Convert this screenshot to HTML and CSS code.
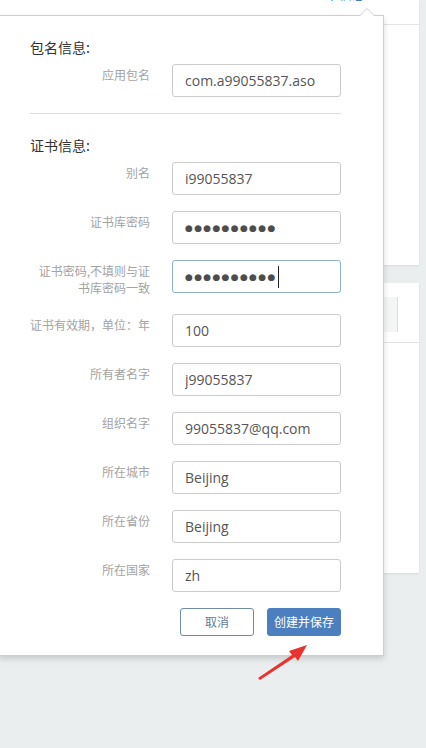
FILE: index.html
```html
<!DOCTYPE html>
<html lang="zh">
<head>
<meta charset="utf-8">
<link rel="stylesheet" href="styles.css">
</head>
<body>
<div class="page">
  <div class="card card-top">
    <div class="card-head"><a class="head-link">证书信息 ▾</a></div>
  </div>
  <div class="card card-bottom">
    <div class="toolbar"><div class="tool-box"></div></div>
  </div>
</div>

<div class="popover">
  <div class="section-title">包名信息:</div>
  <div class="row">
    <label class="label">应用包名</label>
    <input class="field" type="text" value="com.a99055837.aso">
  </div>
  <div class="divider"></div>
  <div class="section-title">证书信息:</div>
  <div class="row">
    <label class="label">别名</label>
    <input class="field" type="text" value="i99055837">
  </div>
  <div class="row">
    <label class="label">证书库密码</label>
    <input class="field field-dots" type="text" value="●●●●●●●●●●">
  </div>
  <div class="row">
    <label class="label">证书密码,不填则与证书库密码一致</label>
    <div class="field-wrap">
      <input class="field field-dots field-focus" type="text" value="●●●●●●●●●●">
      <span class="caret"></span>
    </div>
  </div>
  <div class="row">
    <label class="label">证书有效期，单位：年</label>
    <input class="field" type="text" value="100">
  </div>
  <div class="row">
    <label class="label">所有者名字</label>
    <input class="field" type="text" value="j99055837">
  </div>
  <div class="row">
    <label class="label">组织名字</label>
    <input class="field" type="text" value="99055837@qq.com">
  </div>
  <div class="row">
    <label class="label">所在城市</label>
    <input class="field" type="text" value="Beijing">
  </div>
  <div class="row">
    <label class="label">所在省份</label>
    <input class="field" type="text" value="Beijing">
  </div>
  <div class="row">
    <label class="label">所在国家</label>
    <input class="field" type="text" value="zh">
  </div>
  <div class="actions">
    <button class="btn btn-cancel">取消</button>
    <button class="btn btn-primary">创建并保存</button>
  </div>
</div>

<svg class="annot-arrow" width="60" height="40" viewBox="0 0 60 40">
  <polygon points="2,36 36,13 33,9 51,3 42,19 39,15 4,38" fill="#e8332f"/>
</svg>
</body>
</html>
```
FILE: styles.css
```css
* { box-sizing: border-box; }
html, body { margin: 0; padding: 0; }
body {
  background: #ebeeee;
  width: 426px;
  height: 748px;
  overflow: hidden;
  position: relative;
  font-family: "Noto Sans CJK SC", "Noto Sans", sans-serif;
}
.page {
  display: flex;
  flex-direction: column;
  gap: 18px;
  padding-right: 7px;
}
.card {
  background: #fff;
  box-shadow: 0 1px 2px rgba(0,0,0,0.08);
}
.card-top { height: 265px; }
.card-head {
  height: 25px;
  border-bottom: 1px solid #e3e3e3;
  display: flex;
  justify-content: flex-end;
  padding-right: 44px;
  overflow: hidden;
}
.head-link {
  margin-top: -15px;
  font-size: 13px;
  line-height: 18px;
  color: #3b7bc9;
}
.card-bottom { height: 290px; }
.toolbar {
  height: 60px;
  border-bottom: 1px solid #e3e3e3;
  padding: 14px 0 0 300px;
}
.tool-box {
  width: 98px;
  height: 35px;
  background: #f4f5f5;
  border-right: 1px solid #dcdcdc;
}

.popover {
  position: absolute;
  left: -1px;
  top: 15px;
  width: 385px;
  background: #fff;
  border: 1px solid #cfcfcf;
  box-shadow: 0 3px 6px rgba(0,0,0,0.15);
  padding: 21px 42px 19px 30px;
}
.popover::before,
.popover::after {
  content: "";
  position: absolute;
  right: 8px;
  border: 8px solid transparent;
  border-top: 0;
}
.popover::before {
  top: -8px;
  border-bottom-color: #cfcfcf;
}
.popover::after {
  top: -7px;
  border-bottom-color: #fff;
}
.section-title {
  font-size: 14px;
  line-height: 20px;
  color: #333;
  margin-bottom: 7px;
}
.row {
  display: flex;
  align-items: flex-start;
  margin-bottom: 16px;
}
.label {
  width: 120px;
  flex: none;
  text-align: right;
  font-size: 12px;
  line-height: 17px;
  color: #a3a3a3;
  padding: 2px 0;
  margin-right: 22px;
}
.field-wrap {
  position: relative;
  display: flex;
}
.field {
  width: 169px;
  height: 33px;
  border: 1px solid #cbcbcb;
  border-radius: 3px;
  padding: 0 12px;
  font-family: "Open Sans", "Noto Sans", sans-serif;
  font-size: 14px;
  color: #555;
  background: #fff;
  outline: none;
}
.field-dots {
  font-family: "DejaVu Sans", sans-serif;
  font-size: 9px;
  letter-spacing: 1.3px;
  color: #4d4d4d;
}
.field-focus {
  border-color: #8db2c9;
}
.caret {
  position: absolute;
  left: 106px;
  top: 6px;
  width: 1px;
  height: 22px;
  background: #222;
}
.divider {
  height: 1px;
  background: #dcdcdc;
  margin: 0 0 21px;
}
.actions {
  display: flex;
  justify-content: flex-end;
  gap: 13px;
}
.btn {
  width: 74px;
  height: 28px;
  border-radius: 3px;
  font-family: "Noto Sans CJK SC", sans-serif;
  font-size: 12px;
  line-height: 26px;
  padding: 0;
}
.btn-cancel {
  background: #fff;
  border: 1px solid #6f8ba6;
  color: #5f7d9a;
}
.btn-primary {
  background: #4c7fc0;
  border: 1px solid #4c7fc0;
  color: #fff;
}
.annot-arrow {
  position: absolute;
  left: 256px;
  top: 642px;
}
```
